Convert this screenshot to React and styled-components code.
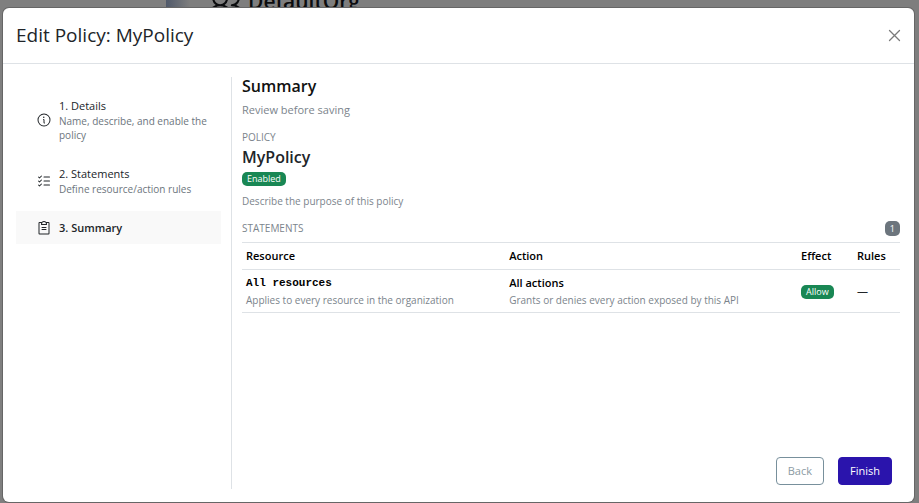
import React from "react";
import styled, { createGlobalStyle } from "styled-components";
import { PiClipboardText, PiInfo, PiListChecks, PiUsers } from "react-icons/pi";

const GlobalStyle = createGlobalStyle`
  * { box-sizing: border-box; }
  body {
    margin: 0;
    background: #808080;
    color: #212529;
    font-family: "Open Sans", "Noto Sans", sans-serif;
    font-size: 11px;
    line-height: 16px;
  }
`;

const Screen = styled.div`
  position: relative;
  display: flex;
  min-height: 100vh;
  padding: 8px 5px 1px 3px;
`;

const Backdrop = styled.div`
  position: absolute;
  inset: 0;
  display: flex;
  background: #7e7e7e;
`;

const BackdropNav = styled.div`
  width: 166px;
  flex: none;
  background: #7f7f7f;
`;

const BackdropMain = styled.div`
  flex: 1;
  padding-left: 43px;
  background: linear-gradient(90deg, #50596a, #7e7e7e 24px);
`;

const OrgName = styled.div`
  display: flex;
  align-items: center;
  gap: 5px;
  margin-top: -16px;
  font-size: 21px;
  line-height: 28px;
  font-weight: 600;
  color: #0b0c0e;
  white-space: nowrap;
`;

const Dialog = styled.section`
  position: relative;
  flex: 1;
  min-width: 0;
  display: flex;
  flex-direction: column;
  background: #fff;
  border-radius: 6px;
  box-shadow: 0 0 0 1px #666;
`;

const DialogHeader = styled.header`
  display: flex;
  align-items: center;
  justify-content: space-between;
  padding: 13px;
  border-bottom: 1px solid #dee2e6;
`;

const DialogTitle = styled.h1`
  margin: 0;
  font-size: 19px;
  line-height: 29px;
  font-weight: 400;
`;

const CloseButton = styled.button`
  display: flex;
  padding: 0;
  border: 0;
  background: none;
  color: #7a7a7a;
`;

const DialogBody = styled.div`
  flex: 1;
  display: flex;
  padding: 13px;
`;

const Steps = styled.nav`
  flex: none;
  width: 216px;
  padding: 12px 10px 0 0;
  border-right: 1px solid #dee2e6;
`;

const Step = styled.button`
  display: flex;
  align-items: center;
  gap: 7px;
  width: 100%;
  padding: 8px 10px 8px 20px;
  margin-bottom: ${(p) => (p.$active ? 0 : 7)}px;
  border: 0;
  background: ${(p) => (p.$active ? "#f9f9f9" : "none")};
  color: #212529;
  font: inherit;
  line-height: 17px;
  font-weight: ${(p) => (p.$active ? 600 : 400)};
  text-align: left;

  svg { flex: none; }
`;

const StepHint = styled.span`
  display: block;
  font-size: 10px;
  line-height: 14px;
  color: #6c757d;
`;

const Content = styled.main`
  flex: 1;
  min-width: 0;
  display: flex;
  flex-direction: column;
  padding: 0 1px 0 10px;
`;

const Heading = styled.h2`
  margin: 0;
  font-size: 16px;
  line-height: 19px;
  font-weight: 600;
  color: ${(p) => p.$color || "#111"};
`;

const Muted = styled.p`
  margin: ${(p) => p.$top}px 0 0;
  font-size: ${(p) => (p.$small ? 10 : 11)}px;
  line-height: 16px;
  color: #7b848c;
`;

const Label = styled.div`
  font-size: 10px;
  line-height: 15px;
  color: #7b848c;
  text-transform: uppercase;
`;

const PolicyBlock = styled.section`
  display: flex;
  flex-direction: column;
  align-items: flex-start;
  margin-top: 12px;

  h2 { margin: 3px 0 5px; }
`;

const Badge = styled.span`
  display: inline-block;
  padding: 2px 5px;
  border-radius: 5px;
  background: #198754;
  color: #fff;
  font-size: 9px;
  line-height: 10px;
  font-weight: 500;
`;

const CountBadge = styled(Badge)`
  line-height: 11px;
  background: #6c757d;
`;

const StatementsBar = styled.div`
  display: flex;
  align-items: center;
  justify-content: space-between;
  margin: 12px 0 6px;
`;

const Table = styled.table`
  width: 100%;
  table-layout: fixed;
  border-collapse: collapse;
  border-top: 1px solid #dee2e6;

  th, td {
    padding: 5px 4px;
    border-bottom: 1px solid #dee2e6;
    text-align: left;
    vertical-align: middle;
  }
  th { color: #000; font-weight: 600; }
  th:nth-child(1) { width: 40%; }
  th:nth-child(3) { width: 56px; }
  th:nth-child(4) { width: 47px; }
`;

const Primary = styled.div`
  color: #000;
  font-weight: 600;
  font-family: ${(p) => (p.$mono ? '"Liberation Mono", monospace' : "inherit")};
`;

const Secondary = styled.div`
  margin-top: 2px;
  font-size: 10px;
  line-height: 14px;
  color: #7b848c;
`;

const Actions = styled.footer`
  display: flex;
  justify-content: flex-end;
  gap: 14px;
  margin-top: auto;
  padding: 0 8px 4px;
`;

const Button = styled.button`
  padding: 5px 11px;
  border: 1px solid ${(p) => (p.$primary ? "#2a14ac" : "#78909c")};
  border-radius: 4px;
  background: ${(p) => (p.$primary ? "#2a14ac" : "#fff")};
  color: ${(p) => (p.$primary ? "#fff" : "#8c9ba3")};
  font: inherit;
`;

const CloseIcon = () => (
  <svg width="13" height="13" viewBox="0 0 13 13" fill="none" stroke="currentColor" strokeWidth="1.3" strokeLinecap="round" aria-hidden="true">
    <path d="M1.5 1.5l10 10M11.5 1.5l-10 10" />
  </svg>
);

const steps = [
  { name: "1. Details", hint: "Name, describe, and enable the policy", Icon: PiInfo },
  { name: "2. Statements", hint: "Define resource/action rules", Icon: PiListChecks },
  { name: "3. Summary", Icon: PiClipboardText, active: true },
];

export default function App() {
  return (
    <Screen>
      <GlobalStyle />
      <Backdrop aria-hidden="true">
        <BackdropNav />
        <BackdropMain>
          <OrgName><PiUsers size={34} />DefaultOrg</OrgName>
        </BackdropMain>
      </Backdrop>
      <Dialog role="dialog" aria-labelledby="dialog-title">
        <DialogHeader>
          <DialogTitle id="dialog-title">Edit Policy: MyPolicy</DialogTitle>
          <CloseButton type="button" aria-label="Close"><CloseIcon /></CloseButton>
        </DialogHeader>
        <DialogBody>
          <Steps>
            {steps.map(({ name, hint, Icon, active }) => (
              <Step key={name} type="button" $active={active} aria-current={active ? "step" : undefined}>
                <Icon size={16} />
                <span>
                  {name}
                  {hint && <StepHint>{hint}</StepHint>}
                </span>
              </Step>
            ))}
          </Steps>
          <Content>
            <Heading>Summary</Heading>
            <Muted $top={6}>Review before saving</Muted>
            <PolicyBlock>
              <Label>Policy</Label>
              <Heading $color="#212529">MyPolicy</Heading>
              <Badge>Enabled</Badge>
              <Muted $top={7} $small>Describe the purpose of this policy</Muted>
            </PolicyBlock>
            <StatementsBar>
              <Label>Statements</Label>
              <CountBadge>1</CountBadge>
            </StatementsBar>
            <Table>
              <thead>
                <tr>
                  <th scope="col">Resource</th>
                  <th scope="col">Action</th>
                  <th scope="col">Effect</th>
                  <th scope="col">Rules</th>
                </tr>
              </thead>
              <tbody>
                <tr>
                  <td>
                    <Primary $mono>All resources</Primary>
                    <Secondary>Applies to every resource in the organization</Secondary>
                  </td>
                  <td>
                    <Primary>All actions</Primary>
                    <Secondary>Grants or denies every action exposed by this API</Secondary>
                  </td>
                  <td><Badge>Allow</Badge></td>
                  <td>—</td>
                </tr>
              </tbody>
            </Table>
            <Actions>
              <Button type="button">Back</Button>
              <Button type="button" $primary>Finish</Button>
            </Actions>
          </Content>
        </DialogBody>
      </Dialog>
    </Screen>
  );
}
